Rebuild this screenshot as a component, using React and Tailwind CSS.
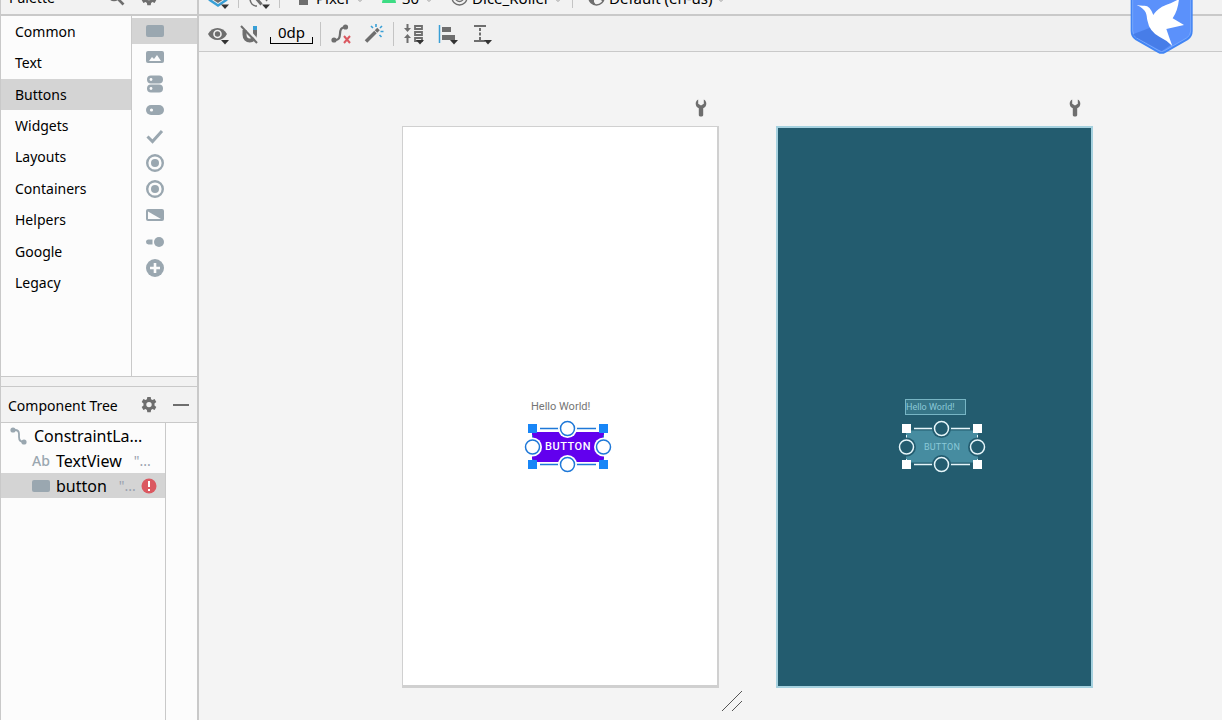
import React, { useState } from "react";

const categories = ["Common", "Text", "Buttons", "Widgets", "Layouts", "Containers", "Helpers", "Google", "Legacy"];

const paletteItems = [
  { name: "Button", icon: <rect x="0" y="3" width="18" height="12" rx="2" /> },
  {
    name: "ImageButton",
    icon: (
      <>
        <rect x="0" y="3" width="18" height="12" rx="2" />
        <path d="M3 13l3-4 2 2 3-4 4 6z" fill="#fcfcfc" />
      </>
    ),
  },
  {
    name: "ChipGroup",
    icon: (
      <>
        <rect x="1" y="0.5" width="16" height="8" rx="4" />
        <rect x="1" y="9.5" width="16" height="8" rx="4" />
        <circle cx="5" cy="4.5" r="1.4" fill="#fcfcfc" />
        <circle cx="5" cy="13.5" r="1.4" fill="#fcfcfc" />
      </>
    ),
  },
  {
    name: "Chip",
    icon: (
      <>
        <rect x="0" y="4" width="18" height="10" rx="5" />
        <circle cx="5.5" cy="9" r="1.6" fill="#fcfcfc" />
      </>
    ),
  },
  { name: "CheckBox", icon: <path d="M1.5 9.5l5 5L16 4" fill="none" stroke="#9aa7b0" strokeWidth="3" /> },
  { name: "RadioGroup", icon: <RadioShape /> },
  { name: "RadioButton", icon: <RadioShape /> },
  {
    name: "ToggleButton",
    icon: (
      <>
        <rect x="0" y="3" width="18" height="12" rx="2" />
        <path d="M2 5.5V13h13z" fill="#fcfcfc" />
      </>
    ),
  },
  {
    name: "Switch",
    icon: (
      <>
        <path d="M2.5 6.5h4v5h-4a2.5 2.5 0 0 1 0-5z" />
        <circle cx="13" cy="9" r="5" />
      </>
    ),
  },
  {
    name: "FloatingActionButton",
    icon: (
      <>
        <circle cx="9" cy="9" r="9" />
        <path d="M9 4v10M4 9h10" stroke="#fcfcfc" strokeWidth="2.6" />
      </>
    ),
  },
];

function RadioShape() {
  return (
    <>
      <circle cx="9" cy="9" r="7.8" fill="none" stroke="#9aa7b0" strokeWidth="2.4" />
      <circle cx="9" cy="9" r="4" />
    </>
  );
}

const Gear = () => (
  <svg width="16" height="16" viewBox="0 0 16 16" fill="#6e6e6e">
    <path
      fillRule="evenodd"
      d="M6.3 0h3.4l.4 2.3 1.3.7 2.2-.9 1.7 2.9-1.8 1.5v2l1.8 1.5-1.7 2.9-2.2-.8-1.3.8-.4 2.3H6.3l-.4-2.3-1.3-.8-2.2.8L.7 10l1.8-1.5v-2L.7 5l1.7-2.9 2.2.9 1.3-.7zM8 4.900a2.700 2.700 0 1 0 0 5.400 2.700 2.700 0 0 0 0-5.400z"
    />
  </svg>
);

const Chevron = () => (
  <svg width="8" height="6" viewBox="0 0 8 6" fill="none" stroke="#9a9a9a" className="mb-[10px]">
    <path d="M1.500 1L4 3.500 6.500 1" />
  </svg>
);

const Separator = () => <div className="w-px self-stretch bg-[#c4c4c4]" />;

const Wrench = () => (
  <svg width="12" height="18" viewBox="0 0 12 18" fill="#6e6e6e">
    <path d="M3.2.4v4.400l2.8 1.600 2.8-1.600V.4C10.600 1.400 11.500 3 11.300 5c-.2 2-1.300 3.600-3.100 4.300V16c0 2-4.400 2-4.400 0V9.300C2 8.600.9 7 .7 5 .5 3 1.400 1.400 3.200.4z" />
  </svg>
);

// Small triangle under icons that open a popup
const Corner = () => <path d="M13 17h8l-4 4.500z" fill="#333" />;

function ToolButton({ label, children, className = "" }) {
  return (
    <button type="button" aria-label={label} className={className}>
      <svg width="22" height="22" viewBox="0 0 22 22" fill="none">
        {children}
      </svg>
    </button>
  );
}

// Handles and anchors around the selected widget
function Selection({ line, square, fill, halo }) {
  return (
    <svg width="92" height="56" viewBox="0 0 92 56" fill="none" className="absolute -left-[10px] -top-[10px] pointer-events-none">
      <path d="M10.500 10v36M81.500 10v36" stroke={line} strokeDasharray="3 3" />
      <path d="M10 9.500h72M10 45.500h72" stroke={halo} strokeWidth="4" />
      <path d="M18 9.500h56M18 45.500h56" stroke={line} strokeWidth="1.500" />
      {[[45.5, 9.5], [10.5, 28], [81.5, 28], [45.5, 45.5]].map(([x, y]) => (
        <g key={`${x}-${y}`}>
          <circle cx={x} cy={y} r="9.500" fill={halo} />
          <circle cx={x} cy={y} r="7" fill={fill} stroke={line} strokeWidth="1.500" />
        </g>
      ))}
      {[[6, 5], [77, 5], [6, 41], [77, 41]].map(([x, y]) => (
        <rect key={`${x}-${y}`} x={x} y={y} width="9" height="9" fill={square} />
      ))}
    </svg>
  );
}

function Palette() {
  const [category, setCategory] = useState("Buttons");
  const [item, setItem] = useState("Button");

  return (
    <section className="bg-[#fcfcfc]">
      <header className="h-4 overflow-hidden flex items-end border-b-2 border-[#c9c9c9] bg-[#f2f2f2] pl-2 pr-10">
        <h2 className="flex-1 text-sm leading-5 pb-1.5">Palette</h2>
        <button type="button" aria-label="Search" className="mr-4 pb-2">
          <svg width="18" height="18" viewBox="0 0 18 18" fill="none" stroke="#6e6e6e" strokeWidth="2.6">
            <circle cx="7" cy="7" r="5" />
            <path d="M10.500 10.500l6 6" />
          </svg>
        </button>
        <button type="button" aria-label="Palette settings" className="pb-2">
          <Gear />
        </button>
      </header>
      <div className="flex h-[361px] border-b border-[#c9c9c9]">
        <ul className="grid auto-rows-fr h-[283px] w-[130px]">
          {categories.map((c) => (
            <li key={c} className="flex">
              <button
                type="button"
                onClick={() => setCategory(c)}
                className={`w-full pl-[14px] text-left text-sm ${c === category ? "bg-[#d4d4d4]" : ""}`}
              >
                {c}
              </button>
            </li>
          ))}
        </ul>
        <div className="flex-1 border-l border-[#c9c9c9] pt-0.5">
          <ul className="grid auto-rows-fr h-[263px]">
            {paletteItems.map((p) => (
              <li key={p.name} className="flex">
                <button
                  type="button"
                  aria-label={p.name}
                  onClick={() => setItem(p.name)}
                  className={`w-full flex items-center pl-[14px] ${p.name === item ? "bg-[#d4d4d4]" : ""}`}
                >
                  <svg width="18" height="18" viewBox="0 0 18 18" fill="#9aa7b0">
                    {p.icon}
                  </svg>
                </button>
              </li>
            ))}
          </ul>
        </div>
      </div>
    </section>
  );
}

function ComponentTree() {
  return (
    <section className="flex-1 flex flex-col mt-[9px] border-t border-[#c9c9c9]">
      <header className="h-9 flex items-center border-b border-[#c9c9c9] bg-[#f2f2f2] pl-[7px] pr-2">
        <h2 className="flex-1 text-sm whitespace-nowrap pt-0.5">Component Tree</h2>
        <button type="button" aria-label="Tree settings" className="mr-4">
          <Gear />
        </button>
        <button type="button" aria-label="Hide" className="w-4 h-5 flex items-center">
          <span className="block w-4 h-0.5 bg-[#6e6e6e]" />
        </button>
      </header>
      <div className="flex-1 flex bg-[#fcfcfc]">
        <ul className="w-[164px] text-base">
          <li className="h-[25px] flex items-center gap-[6px] pl-2">
            <svg width="19" height="18" viewBox="0 0 19 18" fill="#9aa7b0">
              <circle cx="4" cy="3" r="2.6" />
              <circle cx="15" cy="15" r="2.6" />
              <path d="M4 3h2c3 0 4 1.500 4 4v3c0 3 1 5 5 5" fill="none" stroke="#9aa7b0" strokeWidth="1.8" />
            </svg>
            <button type="button">ConstraintLa...</button>
          </li>
          <li className="h-[25px] flex items-center pl-[31px]">
            <span className="w-6 text-sm font-medium text-[#9aa7b0]">Ab</span>
            <button type="button">TextView</button>
            <span className="ml-3 text-sm text-gray-400">"...</span>
          </li>
          <li className="h-[25px] flex items-center pl-[31px] pr-2 bg-[#d4d4d4]">
            <span className="w-[18px] h-3 mr-[6px] rounded-xs bg-[#9aa7b0]" />
            <button type="button">button</button>
            <span className="ml-3 flex-1 text-sm text-gray-400">"...</span>
            <svg width="16" height="16" viewBox="0 0 16 16" fill="#db5860">
              <circle cx="8" cy="8" r="7.5" />
              <path d="M7 3h2v6H7zM7 11h2v2H7z" fill="#fff" />
            </svg>
          </li>
        </ul>
        <div className="flex-1 border-l border-[#c9c9c9]" />
      </div>
    </section>
  );
}

function DeviceBar() {
  return (
    <div className="h-4 overflow-hidden flex items-end border-b-2 border-[#c9c9c9] bg-[#f2f2f2] pl-[9px] text-[15px] leading-5 whitespace-nowrap">
      <button type="button" aria-label="Design surface" className="pb-1">
        <svg width="22" height="20" viewBox="0 0 22 20" fill="none">
          <path d="M10 1l9 6-9 6-9-6z" fill="#6e6e6e" />
          <path d="M1 9.500l9 6 9-6" stroke="#389fd6" strokeWidth="2.5" />
          <path d="M13 14.500h8l-4 4.500z" fill="#333" />
        </svg>
      </button>
      <div className="h-2 flex ml-2 mb-1.5"><Separator /></div>
      <button type="button" aria-label="Orientation" className="ml-[10px] pb-1">
        <svg width="22" height="20" viewBox="0 0 22 20" fill="none" stroke="#6e6e6e" strokeWidth="1.600">
          <path d="M1 8c0 5 3 8 7 8M5 5l8 9M14 5l4 6M6 8l6 7" />
          <path d="M13 14.500h8l-4 4.500z" fill="#333" stroke="none" />
        </svg>
      </button>
      <div className="h-2 flex ml-2 mb-1.5"><Separator /></div>
      <button type="button" className="flex items-end gap-[7px] ml-[18px]">
        <svg width="11" height="18" viewBox="0 0 11 18" className="mb-[9px]">
          <path d="M1 0h9v18H1z" fill="#6e6e6e" />
          <path d="M3 3h5v10H3z" fill="#f2f2f2" />
        </svg>
        <span className="pb-1.5">Pixel</span>
        <Chevron />
      </button>
      <button type="button" className="flex items-end gap-[6px] ml-[18px]">
        <svg width="14" height="10" viewBox="0 0 14 10" className="mb-[11px]">
          <path d="M0 10a7 7 0 0 1 14 0z" fill="#3ddc84" />
        </svg>
        <span className="pb-1.5">30</span>
        <Chevron />
      </button>
      <button type="button" className="flex items-end gap-1 ml-[18px]">
        <svg width="17" height="17" viewBox="0 0 17 17" fill="none" stroke="#6e6e6e" strokeWidth="1.4" className="mb-2">
          <circle cx="8.5" cy="8.5" r="7.5" />
          <circle cx="8.5" cy="8.5" r="4" />
        </svg>
        <span className="pb-1.5">Dice_Roller</span>
        <Chevron />
      </button>
      <div className="h-2 flex ml-[10px] mb-1.5"><Separator /></div>
      <button type="button" className="flex items-end gap-1 ml-[15px]">
        <svg width="17" height="17" viewBox="0 0 17 17" className="mb-2">
          <circle cx="8.5" cy="8.5" r="7.5" fill="#f2f2f2" stroke="#6e6e6e" strokeWidth="1.6" />
          <path d="M1 6l5 4v3l2 3C4 16 1 12 1 8zM9 1l7 5-1 7-3-3H9L8 7l4-2z" fill="#6e6e6e" />
        </svg>
        <span className="pb-1.5">Default (en-us)</span>
        <Chevron />
      </button>
    </div>
  );
}

function Toolbar() {
  return (
    <div className="h-9 flex items-center border-b border-[#c9c9c9] bg-[#f0f0f0] pl-[9px]">
      <ToolButton label="View options">
        <path d="M0 11c4-8 15-8 19 0-4 8-15 8-19 0z" fill="#6e6e6e" />
        <circle cx="9.500" cy="11" r="4.300" fill="#f0f0f0" />
        <circle cx="9.500" cy="11" r="2.700" fill="#6e6e6e" />
        <Corner />
      </ToolButton>
      <ToolButton label="Autoconnect" className="ml-[10px]">
        <path d="M4.500 7v4.500c0 8 10.500 8 10.500 0V7" stroke="#6e6e6e" strokeWidth="4" />
        <path d="M3 1l15 17" stroke="#f0f0f0" strokeWidth="2.500" />
        <path d="M1 3l16 17" stroke="#6e6e6e" strokeWidth="2" />
        <path d="M13 3h4v4h-4z" fill="#389fd6" />
      </ToolButton>
      <button type="button" className="relative ml-2 w-[43px] h-5 text-[15px] leading-4 pb-1">
        0dp
        <span className="absolute inset-x-0 bottom-0 h-[7px] border border-t-0 border-black" />
      </button>
      <div className="h-6 flex ml-[7px]"><Separator /></div>
      <ToolButton label="Clear constraints" className="ml-[9px]">
        <path d="M4 17c11 1 1-13 12-13" stroke="#6e6e6e" strokeWidth="2.200" />
        <circle cx="4" cy="17" r="2.600" fill="#6e6e6e" />
        <circle cx="15.500" cy="4" r="2.600" fill="#6e6e6e" />
        <path d="M14 13l6 7M20 13l-6 7" stroke="#db5860" strokeWidth="2" />
      </ToolButton>
      <ToolButton label="Infer constraints" className="ml-3">
        <path d="M2 18.500l9.500-9.500" stroke="#6e6e6e" strokeWidth="3.600" />
        <path d="M12 8.500l2.500-2.500" stroke="#6e6e6e" strokeWidth="3.600" />
        <path d="M7 3l2 2M12 1v3M18 3l-2 2M16.500 8.500h3M15.500 12l2 2" stroke="#389fd6" strokeWidth="1.600" />
      </ToolButton>
      <div className="h-6 flex ml-[7px]"><Separator /></div>
      <ToolButton label="Pack" className="ml-[9px]">
        <path d="M4.500 1v6M4.500 14v6" stroke="#6e6e6e" strokeWidth="2" />
        <path d="M1 5h7L4.500 9zM1 15h7l-3.500-4z" fill="#6e6e6e" />
        <path d="M12 3h7v3h-7zM12 9h7v3h-7zM12 15h7v3h-7z" stroke="#6e6e6e" strokeWidth="1.800" />
        <Corner />
      </ToolButton>
      <ToolButton label="Align" className="ml-3">
        <path d="M2.500 2v18" stroke="#389fd6" strokeWidth="1.500" />
        <path d="M5 4h9v5H5zM5 12h13v5H5z" fill="#6e6e6e" />
        <Corner />
      </ToolButton>
      <ToolButton label="Guidelines" className="ml-3">
        <path d="M3 3h12M3 18h11" stroke="#6e6e6e" strokeWidth="2" />
        <path d="M9 5v12" stroke="#6e6e6e" strokeWidth="2" strokeDasharray="3 1.500" />
        <Corner />
      </ToolButton>
    </div>
  );
}

function Canvas() {
  return (
    <div className="flex-1 flex items-start pl-[203px] pt-[47px] bg-[#f4f4f4]">
      <div className="flex flex-col">
        <button type="button" aria-label="Design warnings" className="self-end mr-3 mb-[9px]">
          <Wrench />
        </button>
        <div className="relative w-[317px] h-[562px] bg-white border border-[#d0d0d0] border-r-2 border-b-[3px] font-[Roboto,sans-serif]">
          <p className="absolute left-32 top-[272px] text-[11px] leading-4 text-[#757575] whitespace-nowrap">Hello World!</p>
          <div className="absolute left-[129px] top-[302px]">
            <button type="button" className="block w-[72px] h-9 border-y-[3px] border-white bg-[#6200ee] text-[11px] leading-3 font-medium tracking-wider text-white">
              BUTTON
            </button>
            <Selection line="#1e78d8" square="#1886f7" fill="#fff" halo="#fff" />
          </div>
        </div>
      </div>
      <svg width="22" height="22" viewBox="0 0 22 22" stroke="#555" className="ml-0.5 mt-[591px]">
        <path d="M1 21L21 1M11 21l10-10" />
      </svg>
      <div className="flex flex-col ml-[33px]">
        <button type="button" aria-label="Blueprint warnings" className="self-end mr-3 mb-[9px]">
          <Wrench />
        </button>
        <div className="relative w-[317px] h-[562px] bg-[#235c6f] border-2 border-[#a5d1df] font-[Roboto,sans-serif]">
          <p className="absolute left-[127px] top-[271px] w-[61px] h-4 border border-[#77b5c4] bg-[#367587] text-[9px] leading-[15px] text-[#8ac9d8] whitespace-nowrap">
            Hello World!
          </p>
          <div className="absolute left-32 top-[301px]">
            <button type="button" className="block w-[72px] h-9 bg-[#468ca0] text-[9px] leading-3 tracking-wide text-[#8ac9d8]">BUTTON</button>
            <Selection line="#e6f6fa" square="#fff" fill="#235c6f" halo="#235c6f" />
          </div>
        </div>
      </div>
    </div>
  );
}

const BirdBadge = () => (
  <svg width="64" height="56" viewBox="60 -3 192 168" className="absolute right-7 top-0" aria-hidden="true">
    <path d="M62-30V90Q62 108 76 117L143 155Q155 162 167 155L234 117Q248 108 248 90V-30z" fill="#4285f4" />
    <path d="M68-30V90Q68 104 80 111L146 149Q155 154 164 149L230 111Q242 104 242 90V-30z" fill="#5b91fb" stroke="#8db5ff" strokeWidth="2" />
    <path d="M69 100L120 80 185 130 155 151 78 109z" fill="#477de8" />
    <path d="M80 12Q94 15 104 14Q120 14 130 42Q136 30 156 17Q190 4 207-6Q204 28 188 52L222 72L169 84Q176 105 187 135Q168 116 148 107Q118 92 112 58C109 40 112 27 80 12z" fill="#fff" />
  </svg>
);

export default function App() {
  return (
    <div className="relative min-h-screen flex overflow-hidden bg-[#f2f2f2] text-black font-['Noto_Sans','Noto_Sans_CJK_SC',sans-serif]">
      <aside className="w-[199px] shrink-0 flex flex-col border-l border-r-2 border-[#c9c9c9]">
        <Palette />
        <ComponentTree />
      </aside>
      <main className="flex-1 min-w-0 flex flex-col">
        <DeviceBar />
        <Toolbar />
        <Canvas />
      </main>
      <BirdBadge />
    </div>
  );
}
